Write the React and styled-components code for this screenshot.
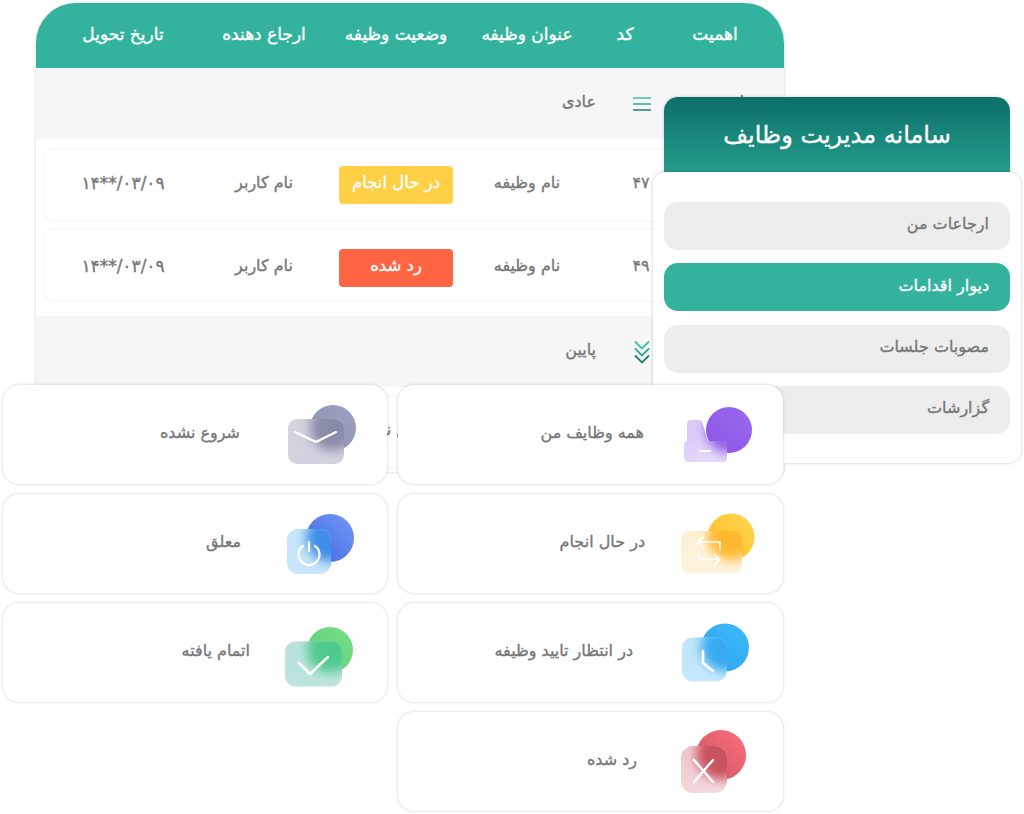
import React from 'react';
import styled, { createGlobalStyle } from 'styled-components';

const Global = createGlobalStyle`
  html, body { margin: 0; padding: 0; background: #fff; }
  body { font-family: "DejaVu Sans", sans-serif; width: 1024px; height: 814px; overflow: hidden; }
  * { box-sizing: border-box; }
`;

const Canvas = styled.div`
  position: relative;
  width: 1024px;
  height: 814px;
  overflow: hidden;
  direction: rtl;
`;

const Label = styled.span`
  display: block;
  font-size: ${p => p.$size || 16}px;
  font-weight: 400;
  line-height: 1.2;
  -webkit-text-stroke: 0.35px currentColor;
  transform: translateY(${p => p.$up || -2}px);
`;

/* --- table window --- */
const TableWindow = styled.section`
  position: absolute;
  left: 36px;
  top: 3px;
  width: 748px;
  height: 469px;
  border-radius: 40px 40px 0 0;
  background: #fff;
  box-shadow: 0 0 3px rgba(0, 0, 0, 0.22);
  overflow: hidden;
`;
const TableHead = styled.header`
  display: grid;
  grid-template-columns: 120px 60px 136px 126px 138px 144px;
  align-items: center;
  justify-items: center;
  height: 65px;
  padding: 0 9px 0 15px;
  background: #33b39d;
  color: #fff;
`;
const PriorityBar = styled.div`
  display: flex;
  align-items: center;
  height: 71px;
  padding-right: 40px;
  background: #f6f6f6;
  color: #777;
`;
const PriorityIcon = styled.span`
  display: flex;
  justify-content: center;
  width: 18px;
  margin-right: 80px;
  margin-left: 37px;
`;
const Marker = styled.span`
  width: 13px;
`;
const RowStack = styled.div`
  display: flex;
  flex-direction: column;
  gap: 10.5px;
  padding: ${p => p.$pad};
`;
const TaskRow = styled.div`
  display: grid;
  grid-template-columns: 90px 88px 140px 122px 142px 140px;
  align-items: center;
  justify-items: center;
  height: 69.5px;
  padding-top: ${p => p.$nudge}px;
  border-radius: 7px;
  background: #fff;
  box-shadow: 0 0 4px rgba(0, 0, 0, 0.08);
  color: #777;
`;
const StatusPill = styled.span`
  display: flex;
  align-items: center;
  justify-content: center;
  width: 114px;
  height: 38px;
  border-radius: 4px;
  background: ${p => p.$bg};
  color: ${p => p.$fg};
`;
const DateText = styled(Label)`
  direction: ltr;
  unicode-bidi: isolate;
`;

/* --- menu window --- */
const MenuTitle = styled.header`
  position: absolute;
  left: 664px;
  top: 97px;
  width: 346px;
  height: 90px;
  padding-top: 23px;
  border-radius: 14px 14px 0 0;
  background: linear-gradient(180deg, #0c6f6b 0%, #2aa592 100%);
  box-shadow: 0 0 3px rgba(0, 0, 0, 0.2);
  color: #fff;
  text-align: center;
`;
const MenuCard = styled.nav`
  position: absolute;
  left: 653px;
  top: 172px;
  width: 368px;
  height: 291px;
  display: flex;
  flex-direction: column;
  gap: 13.3px;
  padding: 30px 11px 0;
  border-radius: 12px;
  background: #fff;
  box-shadow: 0 0 3px rgba(0, 0, 0, 0.25);
`;
const MenuItem = styled.div`
  display: flex;
  align-items: center;
  height: 48px;
  padding: 0 21px;
  border-radius: 14px;
  background: ${p => (p.$active ? '#33b39d' : '#ededed')};
  color: ${p => (p.$active ? '#fff' : '#777')};
`;

/* --- status cards --- */
const StatusBoard = styled.div`
  position: absolute;
  left: 3px;
  top: 385px;
  width: 780px;
  display: flex;
  gap: 11px;
`;
const StatusCol = styled.div`
  flex: 0 0 ${p => p.$w}px;
  display: flex;
  flex-direction: column;
  gap: 10.5px;
`;
const StatusCard = styled.article`
  display: flex;
  align-items: center;
  height: 98.5px;
  padding-right: ${p => p.$inset}px;
  border-radius: 16px;
  background: #fff;
  box-shadow: 0 0 3px rgba(0, 0, 0, 0.22);
  color: #777;
`;
const IconSlot = styled.span`
  display: block;
  width: 90px;
  height: 70px;
  margin-left: ${p => p.$gap}px;
  flex: none;
`;

const Glass = ({ id, c1, c2, glow, tile, tileEdge, x, y, w, h, cx, cy, r, rx, blur = 5.5, extra, children }) => (
  <svg width="90" height="70" viewBox="0 0 90 70">
    <defs>
      <linearGradient id={`${id}c`} x1="1" y1="0" x2="0" y2="1">
        <stop offset="0" stopColor={c1} />
        <stop offset="1" stopColor={c2} />
      </linearGradient>
      <linearGradient id={`${id}t`} x1="0" y1="0" x2="0.6" y2="1">
        <stop offset="0" stopColor={tile} />
        <stop offset="1" stopColor={tileEdge} />
      </linearGradient>
      <filter id={`${id}b`} x="-40%" y="-40%" width="180%" height="180%">
        <feGaussianBlur stdDeviation={blur} />
      </filter>
      <clipPath id={`${id}k`}>
        <rect x={x} y={y} width={w} height={h} rx={rx} />
        {extra}
      </clipPath>
    </defs>
    <circle cx={cx} cy={cy} r={r} fill={`url(#${id}c)`} />
    {extra && React.cloneElement(extra, { fill: tile })}
    <rect x={x} y={y} width={w} height={h} rx={rx} fill={`url(#${id}t)`} />
    <g clipPath={`url(#${id}k)`}>
      <circle cx={cx} cy={cy} r={r} fill={glow} filter={`url(#${id}b)`} />
    </g>
    {children}
  </svg>
);

const line = { stroke: '#fff', fill: 'none', strokeLinecap: 'round', strokeLinejoin: 'round' };

const icons = {
  all: (
    <Glass id="a" c1="#9d68f0" c2="#8a57e4" glow="#9360e8" tile="#dccbf8" tileEdge="#e6dafb" x={4} y={42} w={43} h={21} rx={4} cx={49} cy={31} r={23}
      extra={<path d="M7 25 a4 4 0 0 1 4-4 h8 a4 4 0 0 1 3 2 l6 19 h-21 z" />}>
      <path d="M20 52 h10" {...line} strokeWidth="2" />
    </Glass>
  ),
  progress: (
    <Glass id="b" c1="#ffd84f" c2="#ffb625" glow="#ffb92e" tile="#fff0d4" tileEdge="#fff3de" x={1} y={23} w={61} h={42} rx={8} cx={51} cy={29} r={23.5}>
      <path d="M24 28 l-6 6 l6 6 M19 34 h21 v7 M19 44 v7 h21 M34 46 l6 5 l-6 6" {...line} strokeWidth="1.6" />
    </Glass>
  ),
  wait: (
    <Glass id="c" c1="#3dbcfc" c2="#2f9fea" glow="#37aaf2" tile="#bfe4fb" tileEdge="#c9e9fc" x={2} y={20.5} w={45} h={44} rx={11} cx={45} cy={30.5} r={24}>
      <path d="M23 34 v12 l10 8" {...line} strokeWidth="2.6" />
    </Glass>
  ),
  rejected: (
    <Glass id="d" c1="#f7727f" c2="#d2505d" glow="#c9525f" tile="#eec6cb" tileEdge="#f3dade" x={1} y={20} w={46} h={47} rx={12} cx={41} cy={29} r={25}>
      <path d="M14 34 L33 56 M33 34 L14 56" {...line} strokeWidth="2.4" />
    </Glass>
  ),
  idle: (
    <Glass id="e" c1="#9ba2c0" c2="#8c90ac" glow="#888ca8" tile="#d3d4e0" tileEdge="#d2d3df" x={3} y={20} w={56} h={45} rx={9} cx={48} cy={29} r={23}>
      <path d="M10 33 l21 10 l20 -10" {...line} strokeWidth="2" />
    </Glass>
  ),
  suspended: (
    <Glass id="f" c1="#7398fb" c2="#3f66db" glow="#418ee8" tile="#c4e7fc" tileEdge="#c9e6fb" x={2} y={21} w={44} h={45} rx={11} cx={45} cy={30} r={24}>
      <path d="M24 34 v9" {...line} strokeWidth="2.2" />
      <path d="M18 38 a10.5 10.5 0 1 0 12 0" {...line} strokeWidth="2.2" />
    </Glass>
  ),
  done: (
    <Glass id="g" c1="#74de83" c2="#5ed07f" glow="#4fca8e" tile="#b9e2dc" tileEdge="#bee5df" x={0} y={24.5} w={57} h={45} rx={10} cx={45} cy={33} r={23}>
      <path d="M14 46 l11 11 l18 -17" {...line} strokeWidth="2.6" />
    </Glass>
  ),
};

const HamburgerIcon = () => (
  <svg width="18" height="14" viewBox="0 0 18 14">
    <path d="M0 1h18" stroke="#3dbfa8" strokeWidth="1.7" />
    <path d="M0 7h18" stroke="#2fa592" strokeWidth="1.7" />
    <path d="M0 13h18" stroke="#2a7b70" strokeWidth="1.7" />
  </svg>
);
const ChevronsIcon = () => (
  <svg width="16" height="24" viewBox="0 0 16 24" fill="none" strokeWidth="1.8">
    <path d="M1 1.5l7 7 7-7" stroke="#3dc0a9" />
    <path d="M1 8.5l7 7 7-7" stroke="#2fa592" />
    <path d="M1 15.5l7 7 7-7" stroke="#2a7b70" />
  </svg>
);

const rows = [
  { code: '۴۷', status: 'در حال انجام', bg: '#ffcf45', fg: '#fff', nudge: 0 },
  { code: '۴۹', status: 'رد شده', bg: '#ff6543', fg: '#fff', nudge: 6 },
];

const rightCards = [
  ['all', 'همه وظایف من', 36],
  ['progress', 'در حال انجام', 35],
  ['wait', 'در انتظار تایید وظیفه', 47],
  ['rejected', 'رد شده', 43],
];
const leftCards = [
  ['idle', 'شروع نشده', 45],
  ['suspended', 'معلق', 44],
  ['done', 'اتمام یافته', 35],
];

const Row = ({ r }) => (
  <TaskRow $nudge={r.nudge}>
    <span />
    <Label>{r.code}</Label>
    <Label>نام وظیفه</Label>
    <StatusPill $bg={r.bg} $fg={r.fg}><Label $size={16.5}>{r.status}</Label></StatusPill>
    <Label>نام کاربر</Label>
    <DateText $size={17}>۱۴**/۰۳/۰۹</DateText>
  </TaskRow>
);

const HiddenRow = () => (
  <TaskRow $nudge={0}>
    <span /><span /><span />
    <Label $size={16.5}>شروع نشده</Label>
  </TaskRow>
);

const Card = ({ item, inset }) => (
  <StatusCard $inset={inset}>
    <IconSlot $gap={item[2]}>{icons[item[0]]}</IconSlot>
    <Label>{item[1]}</Label>
  </StatusCard>
);

export default function App() {
  return (
    <Canvas>
      <Global />
      <TableWindow>
        <TableHead>
          {['اهمیت', 'کد', 'عنوان وظیفه', 'وضعیت وظیفه', 'ارجاع دهنده', 'تاریخ تحویل'].map(t => (
            <Label key={t} $size={17} $up={-1}>{t}</Label>
          ))}
        </TableHead>
        <PriorityBar>
          <Marker><Label>ا</Label></Marker>
          <PriorityIcon><HamburgerIcon /></PriorityIcon>
          <Label>عادی</Label>
        </PriorityBar>
        <RowStack $pad="11px 9px 16.5px">
          {rows.map(r => <Row key={r.code} r={r} />)}
        </RowStack>
        <PriorityBar>
          <Marker />
          <PriorityIcon><ChevronsIcon /></PriorityIcon>
          <Label>پایین</Label>
        </PriorityBar>
        <RowStack $pad="10px 9px 5px">
          <HiddenRow />
        </RowStack>
      </TableWindow>
      <MenuTitle><Label $size={24} $up={1}>سامانه مدیریت وظایف</Label></MenuTitle>
      <MenuCard>
        <MenuItem><Label>ارجاعات من</Label></MenuItem>
        <MenuItem $active><Label>دیوار اقدامات</Label></MenuItem>
        <MenuItem><Label>مصوبات جلسات</Label></MenuItem>
        <MenuItem><Label>گزارشات</Label></MenuItem>
      </MenuCard>
      <StatusBoard>
        <StatusCol $w={385}>
          {rightCards.map(i => <Card key={i[0]} item={i} inset={13} />)}
        </StatusCol>
        <StatusCol $w={384}>
          {leftCards.map(i => <Card key={i[0]} item={i} inset={12} />)}
        </StatusCol>
      </StatusBoard>
    </Canvas>
  );
}
